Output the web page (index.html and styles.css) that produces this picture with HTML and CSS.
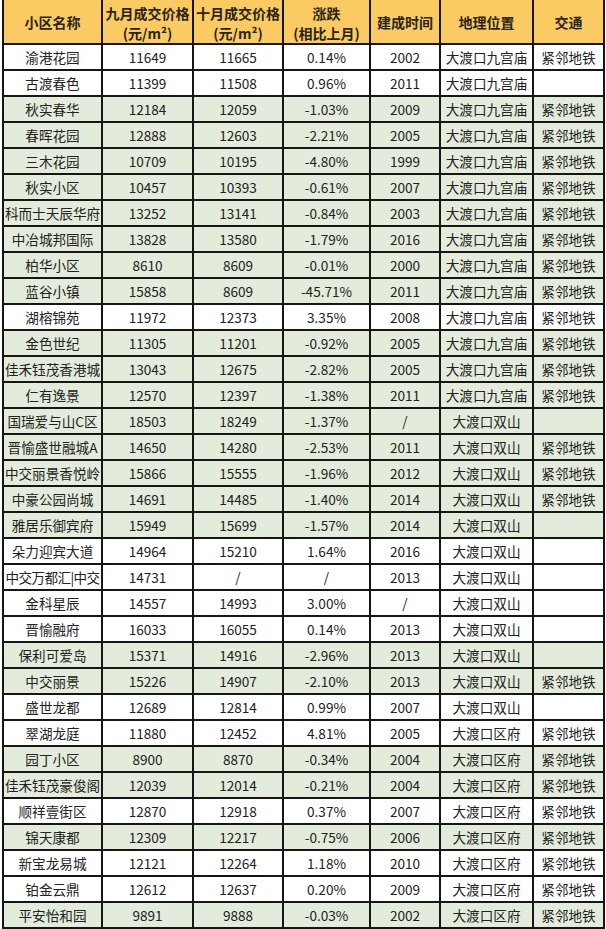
FILE: index.html
```html
<!DOCTYPE html>
<html lang="zh-CN">
<head>
<meta charset="utf-8">
<title>小区成交价格</title>
<link rel="stylesheet" href="styles.css">
</head>
<body>
<table class="price">
  <colgroup>
    <col class="w1"><col class="w2"><col class="w3"><col class="w4"><col class="w5"><col class="w6"><col class="w7">
  </colgroup>
  <thead>
    <tr>
      <th><div class="h one">小区名称</div></th>
      <th><div class="h">九月成交价格<br>(元/m²)</div></th>
      <th><div class="h">十月成交价格<br>(元/m²)</div></th>
      <th><div class="h">涨跌<br>(相比上月)</div></th>
      <th><div class="h one">建成时间</div></th>
      <th><div class="h one">地理位置</div></th>
      <th><div class="h one">交通</div></th>
    </tr>
  </thead>
  <tbody>
    <tr><td><div class="c">渝港花园</div></td><td><div class="c">11649</div></td><td><div class="c">11665</div></td><td><div class="c">0.14%</div></td><td><div class="c">2002</div></td><td><div class="c">大渡口九宫庙</div></td><td><div class="c">紧邻地铁</div></td></tr>
    <tr><td><div class="c">古渡春色</div></td><td><div class="c">11399</div></td><td><div class="c">11508</div></td><td><div class="c">0.96%</div></td><td><div class="c">2011</div></td><td><div class="c">大渡口九宫庙</div></td><td><div class="c"></div></td></tr>
    <tr class="g"><td><div class="c">秋实春华</div></td><td><div class="c">12184</div></td><td><div class="c">12059</div></td><td><div class="c">-1.03%</div></td><td><div class="c">2009</div></td><td><div class="c">大渡口九宫庙</div></td><td><div class="c">紧邻地铁</div></td></tr>
    <tr class="g"><td><div class="c">春晖花园</div></td><td><div class="c">12888</div></td><td><div class="c">12603</div></td><td><div class="c">-2.21%</div></td><td><div class="c">2005</div></td><td><div class="c">大渡口九宫庙</div></td><td><div class="c">紧邻地铁</div></td></tr>
    <tr class="g"><td><div class="c">三木花园</div></td><td><div class="c">10709</div></td><td><div class="c">10195</div></td><td><div class="c">-4.80%</div></td><td><div class="c">1999</div></td><td><div class="c">大渡口九宫庙</div></td><td><div class="c">紧邻地铁</div></td></tr>
    <tr class="g"><td><div class="c">秋实小区</div></td><td><div class="c">10457</div></td><td><div class="c">10393</div></td><td><div class="c">-0.61%</div></td><td><div class="c">2007</div></td><td><div class="c">大渡口九宫庙</div></td><td><div class="c">紧邻地铁</div></td></tr>
    <tr class="g"><td><div class="c">科而士天辰华府</div></td><td><div class="c">13252</div></td><td><div class="c">13141</div></td><td><div class="c">-0.84%</div></td><td><div class="c">2003</div></td><td><div class="c">大渡口九宫庙</div></td><td><div class="c">紧邻地铁</div></td></tr>
    <tr class="g"><td><div class="c">中冶城邦国际</div></td><td><div class="c">13828</div></td><td><div class="c">13580</div></td><td><div class="c">-1.79%</div></td><td><div class="c">2016</div></td><td><div class="c">大渡口九宫庙</div></td><td><div class="c">紧邻地铁</div></td></tr>
    <tr class="g"><td><div class="c">柏华小区</div></td><td><div class="c">8610</div></td><td><div class="c">8609</div></td><td><div class="c">-0.01%</div></td><td><div class="c">2000</div></td><td><div class="c">大渡口九宫庙</div></td><td><div class="c">紧邻地铁</div></td></tr>
    <tr class="g"><td><div class="c">蓝谷小镇</div></td><td><div class="c">15858</div></td><td><div class="c">8609</div></td><td><div class="c">-45.71%</div></td><td><div class="c">2011</div></td><td><div class="c">大渡口九宫庙</div></td><td><div class="c">紧邻地铁</div></td></tr>
    <tr><td><div class="c">湖榕锦苑</div></td><td><div class="c">11972</div></td><td><div class="c">12373</div></td><td><div class="c">3.35%</div></td><td><div class="c">2008</div></td><td><div class="c">大渡口九宫庙</div></td><td><div class="c">紧邻地铁</div></td></tr>
    <tr class="g"><td><div class="c">金色世纪</div></td><td><div class="c">11305</div></td><td><div class="c">11201</div></td><td><div class="c">-0.92%</div></td><td><div class="c">2005</div></td><td><div class="c">大渡口九宫庙</div></td><td><div class="c">紧邻地铁</div></td></tr>
    <tr class="g"><td><div class="c">佳禾钰茂香港城</div></td><td><div class="c">13043</div></td><td><div class="c">12675</div></td><td><div class="c">-2.82%</div></td><td><div class="c">2005</div></td><td><div class="c">大渡口九宫庙</div></td><td><div class="c">紧邻地铁</div></td></tr>
    <tr class="g"><td><div class="c">仁有逸景</div></td><td><div class="c">12570</div></td><td><div class="c">12397</div></td><td><div class="c">-1.38%</div></td><td><div class="c">2011</div></td><td><div class="c">大渡口九宫庙</div></td><td><div class="c">紧邻地铁</div></td></tr>
    <tr class="g"><td><div class="c">国瑞爱与山C区</div></td><td><div class="c">18503</div></td><td><div class="c">18249</div></td><td><div class="c">-1.37%</div></td><td><div class="c">/</div></td><td><div class="c">大渡口双山</div></td><td><div class="c"></div></td></tr>
    <tr class="g"><td><div class="c">晋愉盛世融城A区</div></td><td><div class="c">14650</div></td><td><div class="c">14280</div></td><td><div class="c">-2.53%</div></td><td><div class="c">2011</div></td><td><div class="c">大渡口双山</div></td><td><div class="c">紧邻地铁</div></td></tr>
    <tr class="g"><td><div class="c">中交丽景香悦岭</div></td><td><div class="c">15866</div></td><td><div class="c">15555</div></td><td><div class="c">-1.96%</div></td><td><div class="c">2012</div></td><td><div class="c">大渡口双山</div></td><td><div class="c">紧邻地铁</div></td></tr>
    <tr class="g"><td><div class="c">中豪公园尚城</div></td><td><div class="c">14691</div></td><td><div class="c">14485</div></td><td><div class="c">-1.40%</div></td><td><div class="c">2014</div></td><td><div class="c">大渡口双山</div></td><td><div class="c">紧邻地铁</div></td></tr>
    <tr class="g"><td><div class="c">雅居乐御宾府</div></td><td><div class="c">15949</div></td><td><div class="c">15699</div></td><td><div class="c">-1.57%</div></td><td><div class="c">2014</div></td><td><div class="c">大渡口双山</div></td><td><div class="c"></div></td></tr>
    <tr><td><div class="c">朵力迎宾大道</div></td><td><div class="c">14964</div></td><td><div class="c">15210</div></td><td><div class="c">1.64%</div></td><td><div class="c">2016</div></td><td><div class="c">大渡口双山</div></td><td><div class="c"></div></td></tr>
    <tr><td><div class="c tight">中交万都汇|中交丽景</div></td><td><div class="c">14731</div></td><td><div class="c">/</div></td><td><div class="c">/</div></td><td><div class="c">2013</div></td><td><div class="c">大渡口双山</div></td><td><div class="c"></div></td></tr>
    <tr><td><div class="c">金科星辰</div></td><td><div class="c">14557</div></td><td><div class="c">14993</div></td><td><div class="c">3.00%</div></td><td><div class="c">/</div></td><td><div class="c">大渡口双山</div></td><td><div class="c"></div></td></tr>
    <tr><td><div class="c">晋愉融府</div></td><td><div class="c">16033</div></td><td><div class="c">16055</div></td><td><div class="c">0.14%</div></td><td><div class="c">2013</div></td><td><div class="c">大渡口双山</div></td><td><div class="c"></div></td></tr>
    <tr class="g"><td><div class="c">保利可爱岛</div></td><td><div class="c">15371</div></td><td><div class="c">14916</div></td><td><div class="c">-2.96%</div></td><td><div class="c">2013</div></td><td><div class="c">大渡口双山</div></td><td><div class="c"></div></td></tr>
    <tr class="g"><td><div class="c">中交丽景</div></td><td><div class="c">15226</div></td><td><div class="c">14907</div></td><td><div class="c">-2.10%</div></td><td><div class="c">2013</div></td><td><div class="c">大渡口双山</div></td><td><div class="c">紧邻地铁</div></td></tr>
    <tr><td><div class="c">盛世龙都</div></td><td><div class="c">12689</div></td><td><div class="c">12814</div></td><td><div class="c">0.99%</div></td><td><div class="c">2007</div></td><td><div class="c">大渡口双山</div></td><td><div class="c"></div></td></tr>
    <tr><td><div class="c">翠湖龙庭</div></td><td><div class="c">11880</div></td><td><div class="c">12452</div></td><td><div class="c">4.81%</div></td><td><div class="c">2005</div></td><td><div class="c">大渡口区府</div></td><td><div class="c">紧邻地铁</div></td></tr>
    <tr class="g"><td><div class="c">园丁小区</div></td><td><div class="c">8900</div></td><td><div class="c">8870</div></td><td><div class="c">-0.34%</div></td><td><div class="c">2004</div></td><td><div class="c">大渡口区府</div></td><td><div class="c">紧邻地铁</div></td></tr>
    <tr class="g"><td><div class="c">佳禾钰茂豪俊阁</div></td><td><div class="c">12039</div></td><td><div class="c">12014</div></td><td><div class="c">-0.21%</div></td><td><div class="c">2004</div></td><td><div class="c">大渡口区府</div></td><td><div class="c">紧邻地铁</div></td></tr>
    <tr><td><div class="c">顺祥壹街区</div></td><td><div class="c">12870</div></td><td><div class="c">12918</div></td><td><div class="c">0.37%</div></td><td><div class="c">2007</div></td><td><div class="c">大渡口区府</div></td><td><div class="c">紧邻地铁</div></td></tr>
    <tr class="g"><td><div class="c">锦天康都</div></td><td><div class="c">12309</div></td><td><div class="c">12217</div></td><td><div class="c">-0.75%</div></td><td><div class="c">2006</div></td><td><div class="c">大渡口区府</div></td><td><div class="c">紧邻地铁</div></td></tr>
    <tr><td><div class="c">新宝龙易城</div></td><td><div class="c">12121</div></td><td><div class="c">12264</div></td><td><div class="c">1.18%</div></td><td><div class="c">2010</div></td><td><div class="c">大渡口区府</div></td><td><div class="c">紧邻地铁</div></td></tr>
    <tr><td><div class="c">铂金云鼎</div></td><td><div class="c">12612</div></td><td><div class="c">12637</div></td><td><div class="c">0.20%</div></td><td><div class="c">2009</div></td><td><div class="c">大渡口区府</div></td><td><div class="c">紧邻地铁</div></td></tr>
    <tr class="g"><td><div class="c">平安怡和园</div></td><td><div class="c">9891</div></td><td><div class="c">9888</div></td><td><div class="c">-0.03%</div></td><td><div class="c">2002</div></td><td><div class="c">大渡口区府</div></td><td><div class="c">紧邻地铁</div></td></tr>
  </tbody>
</table>
</body>
</html>
```

FILE: styles.css
```css
html, body {
  margin: 0;
  padding: 0;
  background: #ffffff;
}

body {
  font-family: "Noto Sans CJK SC", "Noto Sans", sans-serif;
  color: #222222;
  overflow: hidden;
}

.price {
  table-layout: fixed;
  border-collapse: separate;
  border-spacing: 2px;
  background: #161616;
  margin: -2px 0 0 2px;
  width: 603px;
}

.w1 { width: 97px; }
.w2 { width: 89px; }
.w3 { width: 88px; }
.w4 { width: 85px; }
.w5 { width: 68px; }
.w6 { width: 91px; }
.w7 { width: 69px; }

.price th,
.price td {
  padding: 0;
  background: #ffffff;
  text-align: center;
  vertical-align: top;
}

.price th {
  background: #f9cb62;
}

.price tr.g td {
  background: #e3ecdb;
}

.h {
  height: 43px;
  box-sizing: border-box;
  padding-top: 3px;
  font-size: 14px;
  font-weight: 700;
  line-height: 20px;
  color: #2a2418;
  overflow: hidden;
}

.h.one {
  padding-top: 12px;
}

.c {
  height: 24px;
  box-sizing: border-box;
  padding-top: 3px;
  font-size: 13.6px;
  line-height: 18px;
  overflow: hidden;
  word-break: break-all;
}

.c.tight {
  letter-spacing: -0.6px;
  margin: 0 -1px;
}
```
